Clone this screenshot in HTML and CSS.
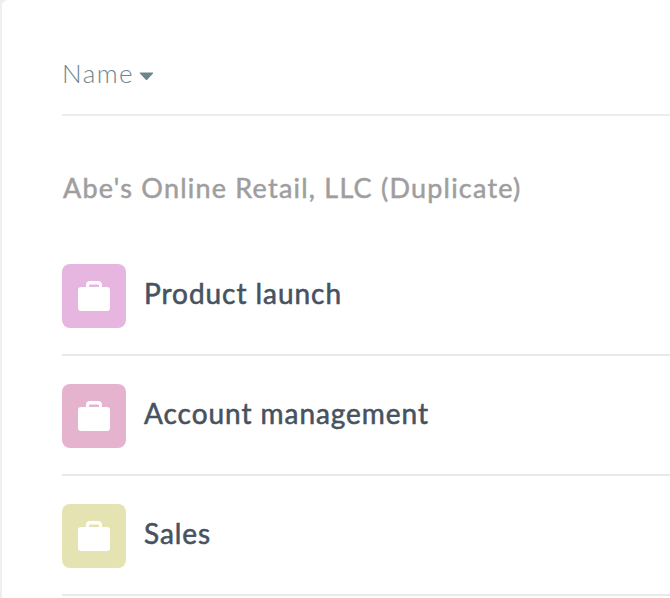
FILE: index.html
```html
<!DOCTYPE html>
<html lang="en">
<head>
<meta charset="utf-8">
<title>Projects</title>
<link rel="stylesheet" href="styles.css">
</head>
<body>
<main class="card">
  <div class="head"><span class="head-label">Name</span><svg class="caret" width="15" height="9" viewBox="0 0 15 9"><path d="M0.5 1.500Q0.500 0.500 1.500 0.500H13.500Q14.500 0.500 14 1.500L8.200 7.800Q7.500 8.500 6.800 7.800L1 1.500Z" fill="#6c858d"/></svg></div>
  <h2 class="group">Abe's Online Retail, LLC (Duplicate)</h2>
  <div class="row"><span class="tile pink"><svg class="bag" width="32" height="30" viewBox="0 0 32 30"><path fill="#fff" fill-rule="evenodd" d="M8 6V4a4 4 0 0 1 4-4h8a4 4 0 0 1 4 4v2h5a3 3 0 0 1 3 3v18a3 3 0 0 1-3 3H3a3 3 0 0 1-3-3V9a3 3 0 0 1 3-3zM12 3.500h8a1 1 0 0 1 1 1V6H11V4.500a1 1 0 0 1 1-1z"/></svg></span><span class="title">Product launch</span></div>
  <div class="row"><span class="tile rose"><svg class="bag" width="32" height="30" viewBox="0 0 32 30"><path fill="#fff" fill-rule="evenodd" d="M8 6V4a4 4 0 0 1 4-4h8a4 4 0 0 1 4 4v2h5a3 3 0 0 1 3 3v18a3 3 0 0 1-3 3H3a3 3 0 0 1-3-3V9a3 3 0 0 1 3-3zM12 3.500h8a1 1 0 0 1 1 1V6H11V4.500a1 1 0 0 1 1-1z"/></svg></span><span class="title">Account management</span></div>
  <div class="row"><span class="tile olive"><svg class="bag" width="32" height="30" viewBox="0 0 32 30"><path fill="#fff" fill-rule="evenodd" d="M8 6V4a4 4 0 0 1 4-4h8a4 4 0 0 1 4 4v2h5a3 3 0 0 1 3 3v18a3 3 0 0 1-3 3H3a3 3 0 0 1-3-3V9a3 3 0 0 1 3-3zM12 3.500h8a1 1 0 0 1 1 1V6H11V4.500a1 1 0 0 1 1-1z"/></svg></span><span class="title">Sales</span></div>
</main>
</body>
</html>
```
FILE: styles.css
```css
html, body {
  margin: 0;
  padding: 0;
  height: 100%;
  overflow: hidden;
  background: #efefef;
}
body {
  padding: 0 0 0 2px;
  box-sizing: border-box;
  font-family: Lato, "Open Sans", sans-serif;
}
.card {
  background: #fff;
  border-top-left-radius: 6px;
  padding-left: 60px;
  height: 598px;
  overflow: hidden;
}
.head {
  height: 116px;
  box-sizing: border-box;
  border-bottom: 2px solid #ededed;
  display: flex;
  align-items: center;
  gap: 5px;
  padding: 31px 0 0 0;
}
.head-label {
  font-size: 26px;
  font-weight: 300;
  color: #6c858d;
  letter-spacing: 1.45px;
}
.caret { margin-top: 7px; }
.group {
  margin: 0;
  height: 148px;
  padding: 56px 0 0 1px;
  box-sizing: border-box;
  font-size: 27px;
  line-height: 32px;
  font-weight: 400;
  -webkit-text-stroke: 0.5px #9e9e9e;
  color: #9e9e9e;
  letter-spacing: 1.22px;
}
.row {
  height: 92px;
  margin-bottom: 28px;
  box-sizing: border-box;
  border-bottom: 2px solid #e9e9e9;
  display: flex;
  align-items: flex-start;
  gap: 18px;
}
.tile {
  width: 64px;
  height: 64px;
  border-radius: 8px;
  flex: none;
  display: flex;
  align-items: center;
  justify-content: center;
}
.bag { display: block; }
.pink { background: #e6b5e0; }
.rose { background: #e6b3cf; }
.olive { background: #e6e3b3; }
.title {
  font-size: 28px;
  line-height: 59px;
  font-weight: 400;
  -webkit-text-stroke: 0.55px #47525f;
  color: #47525f;
  letter-spacing: 0.95px;
}
```
